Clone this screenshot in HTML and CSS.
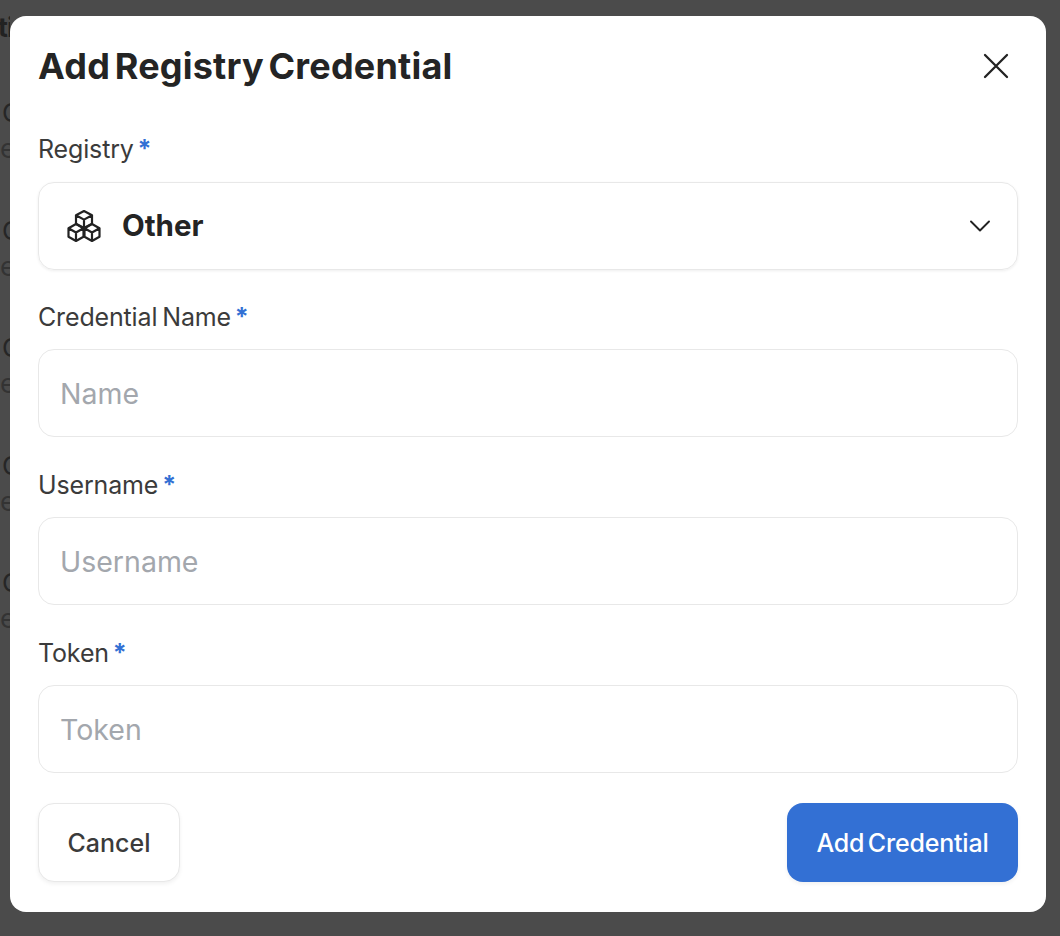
FILE: index.html
```html
<!DOCTYPE html>
<html lang="en">
<head>
<meta charset="utf-8">
<title>Add Registry Credential</title>
<link rel="stylesheet" href="styles.css">
</head>
<body>
<div class="backdrop-page">
  <div class="bg-title">tings</div>
  <div class="bg-row"><div class="bg-name">Container</div><div class="bg-sub">example</div></div>
  <div class="bg-row"><div class="bg-name">Container</div><div class="bg-sub">example</div></div>
  <div class="bg-row"><div class="bg-name">Container</div><div class="bg-sub">example</div></div>
  <div class="bg-row"><div class="bg-name">Container</div><div class="bg-sub">example</div></div>
  <div class="bg-row"><div class="bg-name">Container</div><div class="bg-sub">example</div></div>
</div>
<div class="modal">
  <div class="modal-head">
    <h1 class="modal-title">Add Registry Credential</h1>
    <button class="close" type="button" aria-label="Close">
      <svg width="26" height="26" viewBox="0 0 26 26" fill="none" stroke="#222" stroke-width="2.3" stroke-linecap="round"><path d="M2 2 L24 24 M24 2 L2 24"/></svg>
    </button>
  </div>
  <form class="form">
    <div class="field field-select">
      <label class="label label-first">Registry <span class="req">*</span></label>
      <div class="select">
        <svg class="cube" width="34" height="32" viewBox="0 0 34 32" fill="none" stroke="#222" stroke-width="2.2" stroke-linejoin="round" stroke-linecap="round">
          <path d="M17 1 L25 5.3 V13.7 L17 18 L9 13.7 V5.3 Z M9 5.3 L17 9.6 L25 5.3 M17 9.6 V18"/>
          <path d="M9 14 L16.5 18.2 V26.8 L9 31 L1.5 26.8 V18.2 Z M1.5 18.2 L9 22.5 L16.5 18.2 M9 22.5 V31"/>
          <path d="M25 14 L32.5 18.2 V26.8 L25 31 L17.5 26.8 V18.2 Z M17.5 18.2 L25 22.5 L32.5 18.2 M25 22.5 V31"/>
        </svg>
        <span class="select-value">Other</span>
        <svg class="chev" width="20" height="12" viewBox="0 0 20 12" fill="none" stroke="#222" stroke-width="1.9" stroke-linecap="round" stroke-linejoin="round"><path d="M1 1.5 L10 10.5 L19 1.5"/></svg>
      </div>
    </div>
    <div class="field">
      <label class="label">Credential Name <span class="req">*</span></label>
      <input class="input" placeholder="Name">
    </div>
    <div class="field">
      <label class="label">Username <span class="req">*</span></label>
      <input class="input" placeholder="Username">
    </div>
    <div class="field">
      <label class="label">Token <span class="req">*</span></label>
      <input class="input" placeholder="Token">
    </div>
    <div class="actions">
      <button class="btn btn-cancel" type="button">Cancel</button>
      <button class="btn btn-primary" type="button">Add Credential</button>
    </div>
  </form>
</div>
</body>
</html>
```
FILE: styles.css
```css
* { box-sizing: border-box; }
html, body { margin: 0; height: 100%; }
body {
  width: 1060px;
  height: 936px;
  overflow: hidden;
  background: #4b4b4b;
  font-family: Inter, "Noto Sans", sans-serif;
  color: #262626;
}
.backdrop-page {
  width: 10px;
  overflow: hidden;
  white-space: nowrap;
  padding-top: 10px;
  color: #262626;
}
.bg-title { font-size: 27px; font-weight: 700; line-height: 36px; height: 69px; color: #222; letter-spacing: -1px; margin-left: -2px; }
.bg-row { height: 117.5px; padding-top: 16px; }
.bg-name { font-size: 26px; line-height: 36px; padding-left: 2px; }
.bg-sub { font-size: 27px; line-height: 34px; color: #333; margin-top: 1px; }
.modal {
  position: absolute;
  left: 10px;
  top: 16px;
  width: 1036px;
  height: 896px;
  background: #fff;
  border-radius: 16px;
  padding: 0 28px;
}
.modal-head {
  display: flex;
  justify-content: space-between;
  align-items: center;
  height: 100px;
}
.modal-title {
  margin: 0;
  font-size: 36px;
  font-weight: 700;
  letter-spacing: 0.2px;
  word-spacing: -4px;
  color: #242424;
}
.close {
  border: 0;
  background: none;
  padding: 0;
  margin-right: 9px;
  display: flex;
}
.form { display: flex; flex-direction: column; }
.field { display: flex; flex-direction: column; height: 168px; }
.field-select { height: 167.5px; }
.label {
  font-size: 25px;
  line-height: 67px;
  height: 65.5px;
  color: #3b3b3b;
  letter-spacing: -0.15px;
  word-spacing: -2px;
}
.label-first { height: 66px; line-height: 66px; }
.req { color: #3370d4; font-weight: 700; margin-left: -1px; }
.select {
  display: flex;
  align-items: center;
  height: 87.5px;
  border: 1px solid #e8e8e8;
  border-radius: 16px;
  padding: 0 27px 0 28px;
  box-shadow: 0 1px 3px rgba(0, 0, 0, 0.07);
}
.cube { flex: none; }
.select-value {
  font-size: 29.5px;
  font-weight: 700;
  margin: -2px 0 0 21px;
  color: #242424;
  flex: 1;
}
.input {
  height: 87.5px;
  width: 100%;
  border: 1px solid #e8e8e8;
  border-radius: 16px;
  padding: 2px 21px 0;
  font: 400 28.5px Inter, "Noto Sans", sans-serif;
  outline: none;
}
.input::placeholder { color: #a3a7ad; opacity: 1; }
.actions {
  display: flex;
  justify-content: space-between;
  margin-top: 15.5px;
}
.btn {
  height: 79px;
  border-radius: 16px;
  font: 500 25px Inter, "Noto Sans", sans-serif;
}
.btn-cancel {
  width: 142px;
  background: #fff;
  border: 1px solid #e8e8e8;
  color: #3b3b3b;
  box-shadow: 0 2px 4px rgba(0, 0, 0, 0.06);
}
.btn-primary {
  width: 231px;
  background: #3370d4;
  border: 0;
  color: #fff;
  letter-spacing: -0.2px;
  word-spacing: -3px;
  box-shadow: 0 2px 4px rgba(0, 0, 0, 0.06);
}
```
